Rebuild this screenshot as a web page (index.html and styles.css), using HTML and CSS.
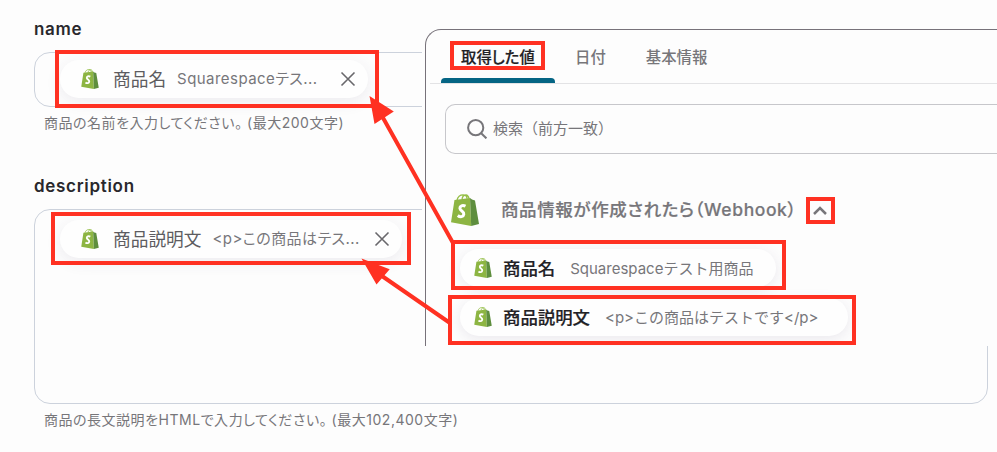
FILE: index.html
```
<!DOCTYPE html>
<html lang="ja">
<head>
  <meta charset="UTF-8">
  <meta name="viewport" content="width=device-width, initial-scale=1.0">
  <title>商品情報</title>
  <link rel="stylesheet" href="styles.css">
</head>
<body>
  <svg class="defs" width="0" height="0">
    <symbol id="bag" viewBox="0 0 28 32">
      <path d="M6 6C7 2 10 .8 12 .8c3 0 4 2 4 4M11 5c.5-2.500 2-4 4-4 2 .2 2.500 1.500 3 3.500" fill="none" stroke="#95bf47" stroke-width="1.300"/>
      <path d="M3.500 6 19 4l1.200 28L0 28.200z" fill="#8db543"/>
      <path d="M19 4l2 1.500 3 1L28 30l-7.800 2z" fill="#5e8e3e"/>
      <path d="M14.500 12.200c-3-1.500-5.700-.3-5.600 2 .1 2.800 4.300 2.900 3.900 6-.4 2.700-3.500 3.300-6 1.300" fill="none" stroke="#fff" stroke-width="3"/>
    </symbol>
    <symbol id="close" viewBox="0 0 16 16">
      <path d="M1.500 1.500l13 13M14.500 1.500l-13 13" fill="none" stroke="currentColor" stroke-width="1.600"/>
    </symbol>
  </svg>

  <form class="form">
    <div class="field">
      <label class="label">name</label>
      <div class="input">
        <div class="chip">
          <svg class="bag"><use href="#bag"/></svg>
          <span class="chip-name">商品名</span>
          <span class="chip-value">Squarespaceテス...</span>
          <svg class="close"><use href="#close"/></svg>
        </div>
      </div>
      <p class="help">商品の名前を入力してください。 (最大200文字)</p>
    </div>

    <div class="field">
      <label class="label">description</label>
      <div class="input textarea">
        <div class="chip chip-long">
          <svg class="bag"><use href="#bag"/></svg>
          <span class="chip-name">商品説明文</span>
          <span class="chip-value">&lt;p&gt;この商品はテス...</span>
          <svg class="close"><use href="#close"/></svg>
        </div>
      </div>
      <p class="help">商品の長文説明をHTMLで入力してください。 (最大102,400文字)</p>
    </div>
  </form>

  <div class="overlay">
    <div class="panel">
      <div class="tabs">
        <div class="tab active">取得した値</div>
        <div class="tab">日付</div>
        <div class="tab">基本情報</div>
      </div>
      <div class="search">
        <svg class="search-icon" viewBox="0 0 20 20">
          <circle cx="8.700" cy="8.700" r="7.600"/>
          <path d="M14.200 14.200l5.200 5.200"/>
        </svg>
        <span>検索（前方一致）</span>
      </div>
      <div class="group">
        <svg class="bag-large"><use href="#bag"/></svg>
        <span class="group-name">商品情報が作成されたら（Webhook）</span>
        <svg class="chevron" viewBox="0 0 14 9"><path d="M1 8l6-6 6 6"/></svg>
      </div>
      <div class="items">
        <div class="item">
          <svg class="bag"><use href="#bag"/></svg>
          <span class="item-name">商品名</span>
          <span class="item-value">Squarespaceテスト用商品</span>
        </div>
        <div class="item item-wide">
          <svg class="bag"><use href="#bag"/></svg>
          <span class="item-name">商品説明文</span>
          <span class="item-value">&lt;p&gt;この商品はテストです&lt;/p&gt;</span>
        </div>
      </div>
    </div>
  </div>

  <!-- highlight boxes and arrows -->
  <svg class="marks" width="997" height="452" viewBox="0 0 997 452">
    <rect x="57" y="52" width="320" height="54"/>
    <rect x="53" y="214" width="356" height="49"/>
    <rect x="452" y="43" width="91" height="25"/>
    <rect x="808" y="199" width="25" height="23"/>
    <rect x="453" y="242" width="331" height="46"/>
    <rect x="450" y="297" width="404" height="46"/>
    <path d="M453 243L382 116M450 323L382 276"/>
    <path class="head" d="M369.500 96l24.300 15.500L374.500 124zM361.500 258.500l28.200 10.800-13.200 15.300z"/>
  </svg>
</body>
</html>
```

FILE: styles.css
```
* {
  box-sizing: border-box;
}

body {
  margin: 0;
  position: relative;
  width: 997px;
  height: 452px;
  overflow: hidden;
  background: #fdfdfd;
  font-family: Inter, 'Noto Sans CJK JP', sans-serif;
  font-feature-settings: 'palt';
  color: #77767a;
}

.defs {
  position: absolute;
}

.form {
  padding: 16px 9px 0 34px;
}

.label {
  display: block;
  height: 36px;
  padding-top: 1px;
  line-height: 24px;
  font-size: 17px;
  font-weight: 600;
  letter-spacing: 0.7px;
  color: #29282c;
}

.input {
  display: flex;
  align-items: flex-start;
  height: 55px;
  padding: 7px 25px;
  border: 1px solid #ccd2dc;
  border-radius: 16px;
}

.textarea {
  height: 195px;
  padding-top: 10px;
}

.chip {
  display: flex;
  align-items: center;
  height: 38px;
  padding: 0 12px 0 21px;
  border-radius: 19px;
  background: #fefefe;
  box-shadow: 0 4px 16px rgba(70, 50, 100, 0.09);
}

.bag {
  width: 18px;
  height: 20px;
  flex: none;
}

.chip-name {
  margin: 0 11px 0 14px;
  padding-bottom: 3px;
  font-size: 17.700px;
  color: #5d5c60;
}

.chip-value {
  padding-bottom: 3px;
  font-size: 15px;
  letter-spacing: 0.45px;
}

.close {
  width: 16px;
  height: 16px;
  margin-left: 22px;
  color: #69686c;
}

.chip-long .close {
  margin-left: 14px;
}

.help {
  margin: 5px 0 39px 10px;
  height: 22px;
  line-height: 22px;
  font-size: 14px;
  letter-spacing: 0.52px;
  white-space: nowrap;
}

/* value picker on top of the form */
.overlay {
  position: absolute;
  left: 422px;
  top: 29px;
  width: 575px;
  height: 317px;
  padding-left: 3px;
  overflow: hidden;
  background: #fdfdfd;
}

.panel {
  height: 340px;
  padding-left: 4px;
  border-top: 1px solid #77727a;
  border-left: 1px solid #77727a;
  border-top-left-radius: 16px;
  white-space: nowrap;
}

.tabs {
  display: flex;
  height: 54px;
  padding-left: 11px;
  border-bottom: 1px solid #e3e3e5;
}

.tab {
  position: relative;
  padding: 0 20px;
  line-height: 55px;
  font-size: 15.400px;
  font-weight: 500;
}

.active {
  width: 114px;
  -webkit-text-stroke: 0.2px;
  color: #222125;
}

.active::after {
  content: '';
  position: absolute;
  left: 0;
  bottom: 0;
  width: 114px;
  height: 5px;
  border-radius: 4px 4px 0 0;
  background: #056584;
}

.search {
  display: flex;
  align-items: center;
  gap: 6px;
  height: 50px;
  margin: 20px 0 0 15px;
  padding: 0 0 1px 21px;
  border: 1px solid #c7c7cb;
  border-right: 0;
  border-radius: 10px 0 0 10px;
  font-size: 15px;
  font-feature-settings: normal;
}

.search-icon {
  width: 20px;
  height: 20px;
  fill: none;
  stroke: #77767a;
  stroke-width: 2;
}

.search span {
  padding-bottom: 2px;
}

.group {
  display: flex;
  align-items: center;
  height: 32px;
  margin: 40px 0 0 21px;
}

.bag-large {
  width: 28px;
  height: 32px;
}

.group-name {
  width: 296px;
  margin-left: 22px;
  padding-bottom: 3px;
  font-size: 17.500px;
  font-weight: 500;
  letter-spacing: 0.6px;
  -webkit-text-stroke: 0.2px;
}

.chevron {
  width: 14px;
  height: 9px;
  margin-left: 16px;
  fill: none;
  stroke: #77767a;
  stroke-width: 2.500;
}

.items {
  display: flex;
  flex-direction: column;
  align-items: flex-start;
  gap: 11px;
  margin: 23px 0 0 30px;
}

.item {
  display: flex;
  align-items: center;
  width: 316px;
  height: 38px;
  padding-left: 14px;
  border-radius: 19px;
  background: #fefefe;
  box-shadow: 0 3px 14px rgba(70, 50, 100, 0.1);
}

.item-wide {
  width: 388px;
}

.item-name {
  margin: 0 15px 0 11px;
  padding-bottom: 2px;
  font-size: 17.400px;
  font-weight: 500;
  -webkit-text-stroke: 0.2px;
  color: #222125;
}

.item-value {
  padding-bottom: 2px;
  font-size: 15px;
  font-feature-settings: normal;
}

.marks {
  position: absolute;
  left: 0;
  top: 0;
  fill: none;
  stroke: #ff3122;
  stroke-width: 4;
}

.head {
  fill: #ff3122;
  stroke: none;
}
```
